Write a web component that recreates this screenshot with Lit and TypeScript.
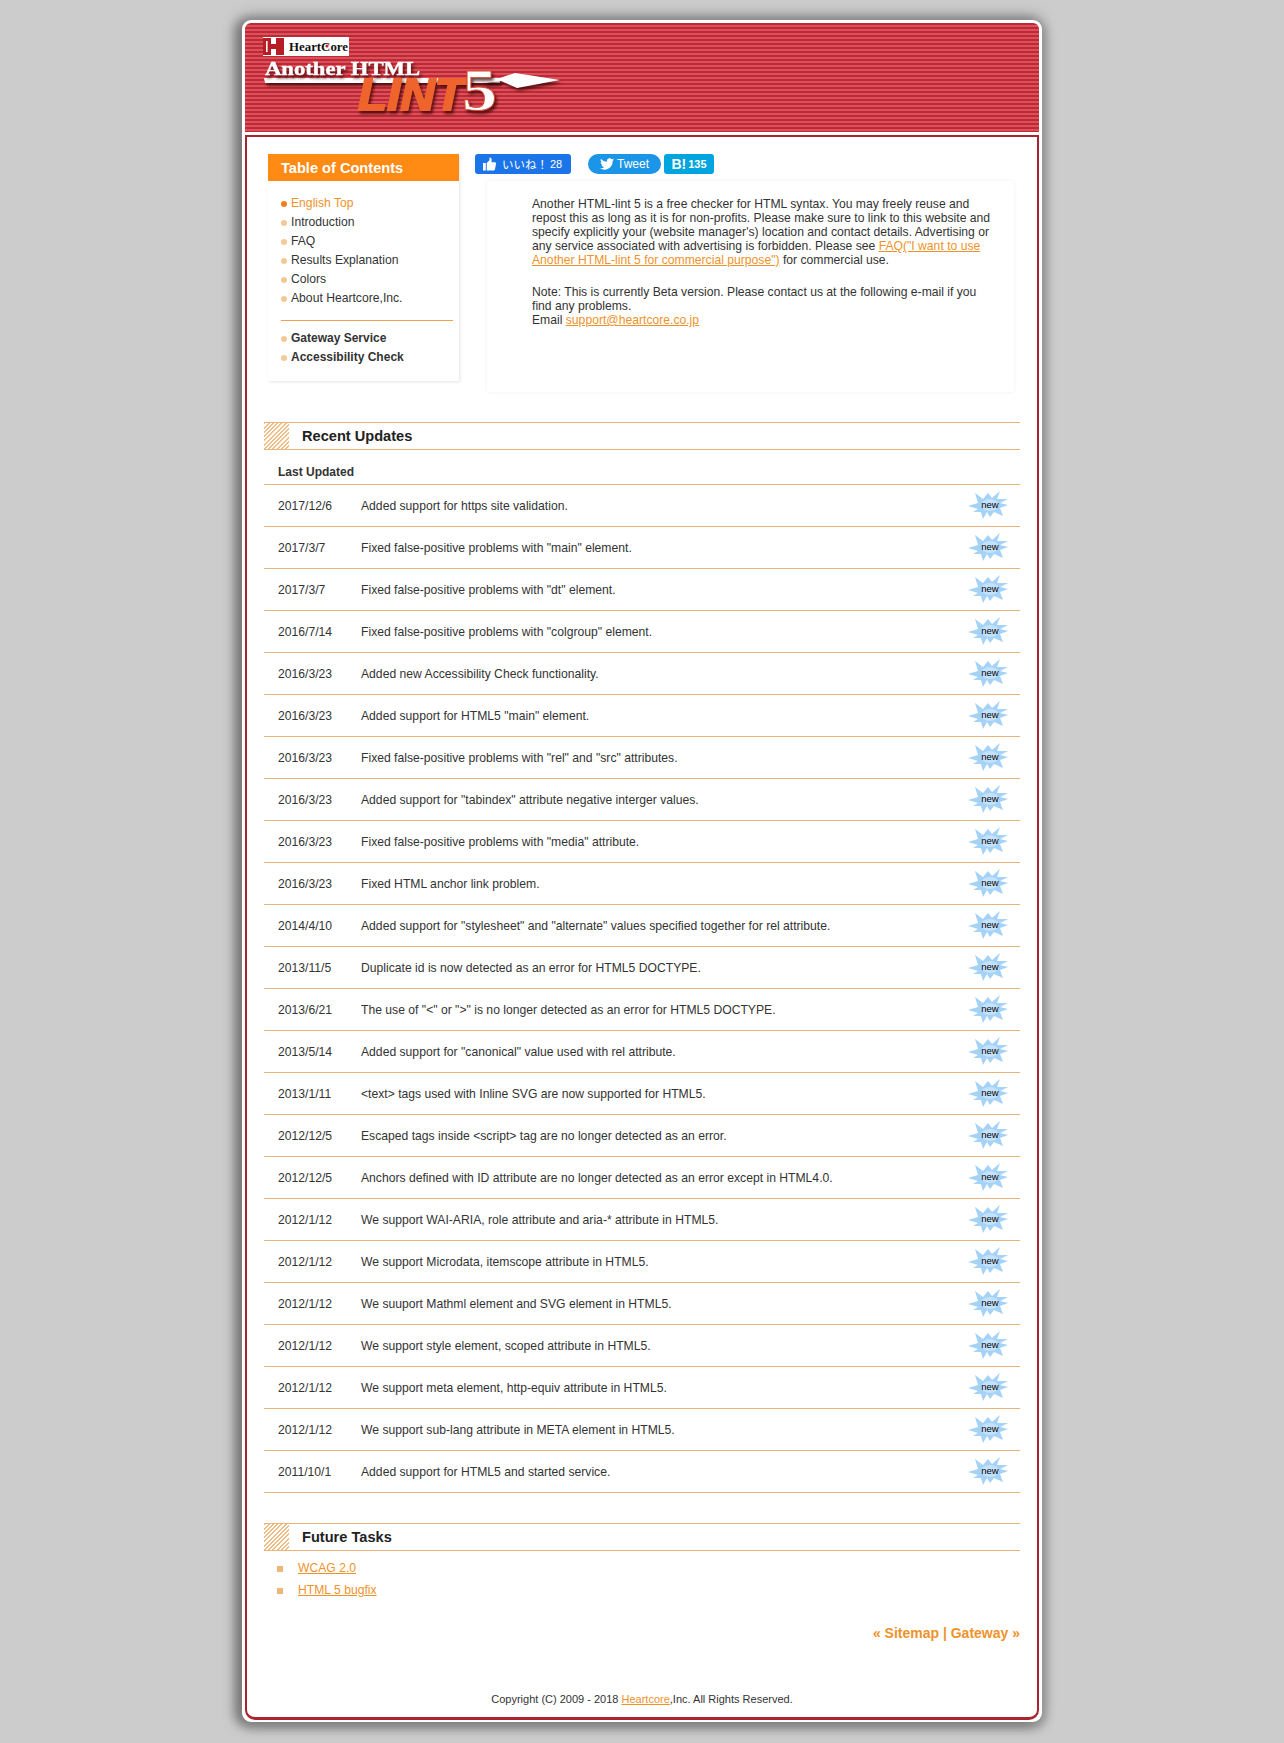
import { LitElement, html, css, svg } from "lit";
import { customElement } from "lit/decorators.js";

const rows: [string, string][] = [
  ["2017/12/6", "Added support for https site validation."],
  ["2017/3/7", 'Fixed false-positive problems with "main" element.'],
  ["2017/3/7", 'Fixed false-positive problems with "dt" element.'],
  ["2016/7/14", 'Fixed false-positive problems with "colgroup" element.'],
  ["2016/3/23", "Added new Accessibility Check functionality."],
  ["2016/3/23", 'Added support for HTML5 "main" element.'],
  ["2016/3/23", 'Fixed false-positive problems with "rel" and "src" attributes.'],
  ["2016/3/23", 'Added support for "tabindex" attribute negative interger values.'],
  ["2016/3/23", 'Fixed false-positive problems with "media" attribute.'],
  ["2016/3/23", "Fixed HTML anchor link problem."],
  ["2014/4/10", 'Added support for "stylesheet" and "alternate" values specified together for rel attribute.'],
  ["2013/11/5", "Duplicate id is now detected as an error for HTML5 DOCTYPE."],
  ["2013/6/21", 'The use of "<" or ">" is no longer detected as an error for HTML5 DOCTYPE.'],
  ["2013/5/14", 'Added support for "canonical" value used with rel attribute.'],
  ["2013/1/11", "<text> tags used with Inline SVG are now supported for HTML5."],
  ["2012/12/5", "Escaped tags inside <script> tag are no longer detected as an error."],
  ["2012/12/5", "Anchors defined with ID attribute are no longer detected as an error except in HTML4.0."],
  ["2012/1/12", "We support WAI-ARIA, role attribute and aria-* attribute in HTML5."],
  ["2012/1/12", "We support Microdata, itemscope attribute in HTML5."],
  ["2012/1/12", "We suuport Mathml element and SVG element in HTML5."],
  ["2012/1/12", "We support style element, scoped attribute in HTML5."],
  ["2012/1/12", "We support meta element, http-equiv attribute in HTML5."],
  ["2012/1/12", "We support sub-lang attribute in META element in HTML5."],
  ["2011/10/1", "Added support for HTML5 and started service."],
];

const star = svg`<svg class="star" width="40" height="28" viewBox="0 0 40 28">
  <polygon fill="#a5d2f8" points="0,15 10,12 7,2 15,8 20,2 24,7 32,0 29,8 40,8 32,12 40,14 32,17 35,25 26,21 22,26 19,21 15,28 13,21 5,21 10,18"/>
  <ellipse cx="22" cy="14" rx="9" ry="6" fill="#c4e2fc"/>
  <text x="22" y="16.500" text-anchor="middle" font-family="Liberation Sans, sans-serif" font-size="9.500" fill="#000">new</text>
</svg>`;

@customElement("app-root")
export class AppRoot extends LitElement {
  static styles = css`
    :host {
      display: block;
      height: 1743px;
      overflow: hidden;
      background: #cccccc;
      font-family: "Liberation Sans", Arial, sans-serif;
      font-size: 12.16px;
      color: #333;
    }
    a { color: #f0922a; }
    .frame {
      width: 794px;
      height: 1697px;
      margin: 20px 0 0 242px;
      display: flex;
      flex-direction: column;
      border: 3px solid #fff;
      border-bottom-width: 2px;
      border-radius: 9px;
      background: #fff;
      box-shadow: -5px 1px 12px 2px #777777, 0 -3px 14px 1px #a0a0a0, 4px 3px 8px #a6a6a6, 0 6px 12px #a0a0a0;
    }
    .banner {
      height: 109px;
      flex: none;
      border-radius: 6px 6px 0 0;
      background: repeating-linear-gradient(to bottom, #bb2a38 0 2px, #de5058 2px 4px);
    }
    .banner svg { display: block; }
    .banner .sh { filter: drop-shadow(2px 3px 1.5px rgba(50, 0, 0, 0.7)); }
    .body {
      flex: 1;
      margin-top: 3px;
      border: 2px solid #a8242e;
      border-bottom-width: 3px;
      border-radius: 0 0 10px 10px;
      background: #fff;
      padding: 17px 17px 0 17px;
      display: flex;
      flex-direction: column;
      min-height: 0;
    }
    .top { display: flex; padding-left: 4px; height: 268px; flex: none; }
    .toc { width: 191px; height: 227px; box-shadow: 1px 1px 3px #e4e4e4; flex: none; }
    .toc h2 {
      margin: 0;
      height: 27px;
      line-height: 28px;
      padding-left: 13px;
      background: #ff8a14;
      color: #fff;
      font-size: 14.6px;
      font-weight: bold;
    }
    .toc ul { list-style: none; margin: 0; padding: 13px 6px 0 13px; }
    .toc ul.more { padding-top: 0; }
    .toc li { height: 19px; line-height: 19px; display: flex; align-items: center; gap: 4px; }
    .dot { width: 6px; height: 6px; border-radius: 50%; background: #f5c896; flex: none; margin-top: 1px; }
    .dot.on { background: #f07d1e; }
    .toc li a { text-decoration: none; }
    .toc hr { border: 0; border-top: 1px solid #f0a050; margin: 12px 6px 8px 13px; }
    .toc .strong { font-weight: bold; font-size: 12px; }
    .right { margin-left: 16px; flex: 1; }
    .social { display: flex; height: 20px; margin-bottom: 7px; }
    .btn { display: flex; align-items: center; color: #fff; font-size: 11px; height: 20px; border-radius: 3px; box-sizing: border-box; white-space: nowrap; }
    .fb { width: 96px; background: #1b74e8; padding-left: 8px; }
    .fb svg { margin-right: 6px; }
    .fb .ja { font-size: 11.5px; font-family: "Noto Sans CJK JP", sans-serif; width: 48px; flex: none; }
    .tw { width: 73px; margin-left: 17px; background: #1b95e8; border-radius: 10px; padding-left: 12px; gap: 3px; font-size: 12px; }
    .hb { width: 50px; margin-left: 3px; background: #00a4de; justify-content: center; gap: 2px; font-weight: bold; }
    .hb b { font-size: 14px; }
    .msg {
      margin-left: 12px;
      width: 527px;
      height: 211px;
      box-sizing: border-box;
      padding: 16px 20px 0 45px;
      box-shadow: 0 0 4px #f0f0f0;
      line-height: 14px;
      border-radius: 2px;
    }
    .msg p { margin: 0 0 18px; }
    .head {
      height: 26px;
      border-top: 1px solid #e8b47a;
      border-bottom: 1px solid #e8b47a;
      display: flex;
      align-items: center;
      flex: none;
    }
    .hatch {
      width: 25px;
      height: 26px;
      margin-right: 13px;
      background: repeating-linear-gradient(135deg, #f0bc85 0 1.4px, #fff 1.4px 3px);
    }
    .head h2 { margin: 0; font-size: 14.6px; font-weight: bold; color: #222; }
    .thead {
      height: 35px;
      box-sizing: border-box;
      padding: 15px 0 0 14px;
      font-weight: bold;
      font-size: 12px;
      line-height: 15px;
      border-bottom: 1px solid #e8b47a;
    }
    .row {
      height: 42px;
      box-sizing: border-box;
      border-bottom: 1px solid #e8b47a;
      display: flex;
      align-items: center;
    }
    .date { width: 83px; padding-left: 14px; flex: none; }
    .desc { flex: 1; }
    .star { margin: 0 12px 2px 0; flex: none; }
    .section2 { margin-top: 30px; }
    .tasks { list-style: none; margin: 6px 0 0; padding: 0; }
    .tasks li { height: 22px; line-height: 22px; display: flex; align-items: center; padding-left: 13px; }
    .sq { width: 6px; height: 6px; background: #efb67a; margin-right: 15px; margin-top: 1px; }
    .nav { margin-top: 23px; text-align: right; font-size: 14px; font-weight: bold; color: #f0922a; line-height: 18px; }
    .nav a { text-decoration: none; }
    .copy { margin-top: 50px; text-align: center; font-size: 11px; line-height: 14px; }
  `;

  render() {
    return html`<div class="frame">
      <header class="banner">
        <svg width="794" height="109" viewBox="0 0 794 109">
          <rect x="18" y="14" width="86" height="19" fill="#fff"/>
          <path d="M18 15h21v17h-21z" fill="#b81c24"/>
          <path d="M26 15h5v6h-5zM26 26h5v6h-5z" fill="#fff"/>
          <path d="M21 18h1.600v11H21z" fill="#fff"/>
          <text x="44" y="27.500" font-family="Liberation Serif, serif" font-weight="bold" font-size="11.500" fill="#111" textLength="59" lengthAdjust="spacingAndGlyphs">HeartCore</text>
          <circle cx="82" cy="23" r="1.600" fill="#c8202a"/>
          <path class="sh" d="M19 55 L255 55 L255 60 L20 60Z" fill="#fff"/>
          <path class="sh" d="M238 54 L252 56 L270 50 L315 57 L272 65 L256 58 L240 60Z" fill="#fff"/>
          <text class="sh" x="20" y="52" font-family="Liberation Serif, serif" font-weight="bold" font-size="19" fill="#fff" stroke="#fff" stroke-width=".4" textLength="155" lengthAdjust="spacingAndGlyphs">Another HTML</text>
          <text class="sh" x="113" y="87" font-family="Liberation Sans, sans-serif" font-weight="bold" font-style="italic" font-size="44" fill="#ef642c" stroke="#ef642c" stroke-width="2" textLength="106" lengthAdjust="spacingAndGlyphs">LINT</text>
          <text class="sh" x="217" y="87" font-family="Liberation Serif, serif" font-weight="bold" font-size="60" fill="#fff" stroke="#d84a30" stroke-width=".8" textLength="35" lengthAdjust="spacingAndGlyphs">5</text>
        </svg>
      </header>
      <div class="body">
        <div class="top">
          <nav class="toc">
            <h2>Table of Contents</h2>
            <ul>
              <li><span class="dot on"></span><a href="#">English Top</a></li>
              <li><span class="dot"></span>Introduction</li>
              <li><span class="dot"></span>FAQ</li>
              <li><span class="dot"></span>Results Explanation</li>
              <li><span class="dot"></span>Colors</li>
              <li><span class="dot"></span>About Heartcore,Inc.</li>
            </ul>
            <hr />
            <ul class="more">
              <li class="strong"><span class="dot"></span>Gateway Service</li>
              <li class="strong"><span class="dot"></span>Accessibility Check</li>
            </ul>
          </nav>
          <div class="right">
            <div class="social">
              <div class="btn fb">
                <svg width="13" height="14" viewBox="0 0 14 14"><path fill="#fff" d="M0 6h3v8H0zM4 6l3-3V0c2 0 3 2 2 5h4c1 0 1 1 1 2l-1 5c0 1-1 2-2 2H4z"/></svg>
                <span class="ja">いいね！</span><span>28</span>
              </div>
              <div class="btn tw">
                <svg width="14" height="12" viewBox="0 0 24 20"><path fill="#fff" d="M24 2.4c-.9.4-1.8.7-2.8.8 1-.6 1.8-1.6 2.2-2.7-1 .6-2 1-3.1 1.2A4.9 4.9 0 0 0 11.900 6.200C7.800 6 4.200 4 1.700.9c-1.300 2.300-.6 5 1.500 6.600-.8 0-1.600-.2-2.200-.6 0 2.400 1.700 4.400 3.900 4.900-.7.2-1.500.2-2.200.1.600 2 2.400 3.400 4.600 3.400A9.900 9.900 0 0 1 0 17.300 14 14 0 0 0 21.600 5c1-.7 1.800-1.600 2.400-2.600z"/></svg>
                <span>Tweet</span>
              </div>
              <div class="btn hb"><b>B!</b><span>135</span></div>
            </div>
            <div class="msg">
              <p>Another HTML-lint 5 is a free checker for HTML syntax. You may freely reuse and repost this as long as it is for non-profits. Please make sure to link to this website and specify explicitly your (website manager's) location and contact details. Advertising or any service associated with advertising is forbidden. Please see <a href="#">FAQ("I want to use Another HTML-lint 5 for commercial purpose")</a> for commercial use.</p>
              <p>Note: This is currently Beta version. Please contact us at the following e-mail if you find any problems.<br />Email <a href="#">support@heartcore.co.jp</a></p>
            </div>
          </div>
        </div>
        <div class="head"><div class="hatch"></div><h2>Recent Updates</h2></div>
        <div class="thead">Last Updated</div>
        ${rows.map(
          ([d, t]) => html`<div class="row"><span class="date">${d}</span><span class="desc">${t}</span>${star}</div>`
        )}
        <div class="head section2"><div class="hatch"></div><h2>Future Tasks</h2></div>
        <ul class="tasks">
          <li><span class="sq"></span><a href="#">WCAG 2.0</a></li>
          <li><span class="sq"></span><a href="#">HTML 5 bugfix</a></li>
        </ul>
        <div class="nav"><a href="#">« Sitemap</a> | <a href="#">Gateway »</a></div>
        <div class="copy">Copyright (C) 2009 - 2018 <a href="#">Heartcore</a>,Inc. All Rights Reserved.</div>
      </div>
    </div>`;
  }
}
